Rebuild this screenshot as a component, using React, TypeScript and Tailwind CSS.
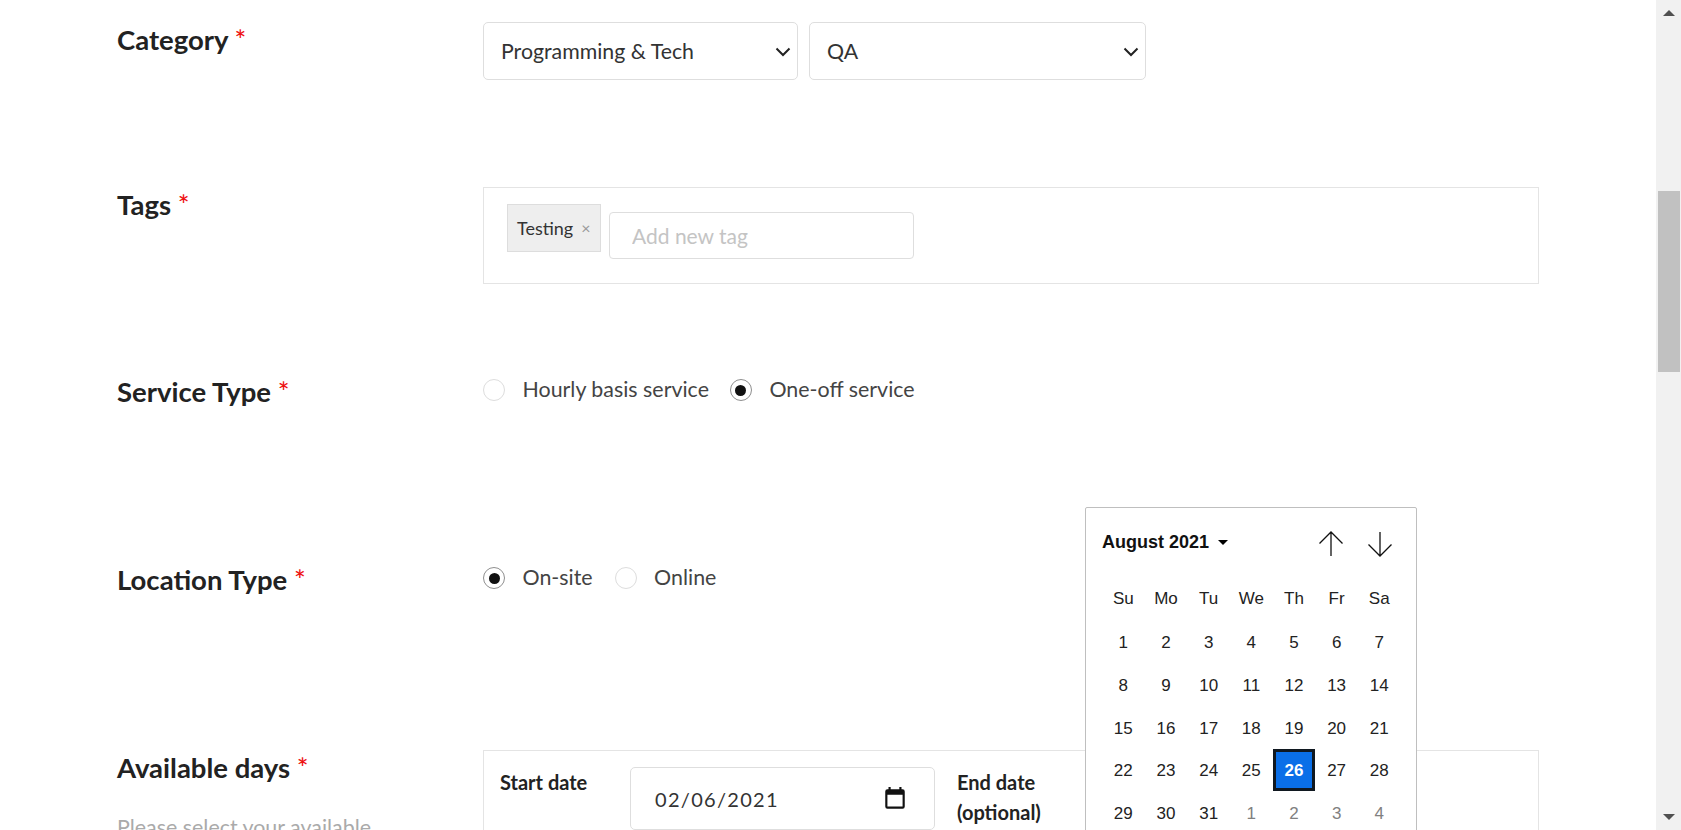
const lato = "font-['Lato','Noto_Sans',sans-serif]";

const weekDays = ["Su", "Mo", "Tu", "We", "Th", "Fr", "Sa"];
const days = [
  ...Array.from({ length: 31 }, (_, i) => ({ n: i + 1, muted: false })),
  ...[1, 2, 3, 4].map((n) => ({ n, muted: true })),
];

function Label({ text }: { text: string }) {
  return (
    <div className="text-[27.5px] leading-[36px] font-bold text-[#222]">
      {text} <span className="relative top-[0px] font-medium text-[#ee1111]">*</span>
    </div>
  );
}

function Radio({ checked, label, className }: { checked?: boolean; label: string; className?: string }) {
  return (
    <label className={`flex items-center ${className ?? ""}`}>
      <span
        className={
          checked
            ? "flex h-[22px] w-[22px] items-center justify-center rounded-full border border-[#8f8f8f] bg-white"
            : "h-[22px] w-[22px] rounded-full border border-[#dddddd] bg-white"
        }
      >
        {checked && <span className="h-[11px] w-[11px] rounded-full bg-[#111]" />}
      </span>
      <span className="relative top-[-1px] ml-[17.500px] text-[21.4px] leading-[26px] text-[#444]">{label}</span>
    </label>
  );
}

function SelectBox({ value, width }: { value: string; width: string }) {
  return (
    <div className={`relative h-[58px] ${width}`}>
      <select className="h-full w-full appearance-none rounded-[5px] border border-[#dedede] bg-white pl-[17px] pt-[2px] text-[21.3px] text-[#333]">
        <option>{value}</option>
      </select>
      <svg
        className="pointer-events-none absolute right-[7px] top-[25px]"
        width="16"
        height="10"
        viewBox="0 0 16 10"
        fill="none"
        stroke="#222"
        strokeWidth="2"
      >
        <path d="M1.500 1.500 8 8l6.500-6.500" />
      </svg>
    </div>
  );
}

function DatePopup() {
  return (
    <div className="absolute left-[1085px] top-[507px] z-10 h-[340px] w-[332px] rounded-[2px] border border-[#bfbfbf] bg-white pl-[16px] font-['Liberation_Sans',Arial,sans-serif] text-[17px] text-[#222]">
      <div className="flex h-[70px] items-center">
        <span className="mb-[2px] text-[18px] font-bold text-[#111]">August 2021</span>
        <span className="mb-[2px] ml-[9px] h-0 w-0 border-x-[5px] border-t-[5px] border-x-transparent border-t-black" />
        <svg className="ml-[90px] mt-[2px]" width="26" height="28" viewBox="0 0 26 28" fill="none" stroke="#111" strokeWidth="1.3">
          <path d="M13 2v24M1.500 13.500 13 2l11.500 11.500" />
        </svg>
        <svg className="ml-[23px] mt-[2px]" width="26" height="28" viewBox="0 0 26 28" fill="none" stroke="#111" strokeWidth="1.3">
          <path d="M13 2v24M1.500 14.500 13 26l11.500-11.500" />
        </svg>
      </div>
      <div className="grid grid-cols-[repeat(7,42.67px)] auto-rows-[42.67px]">
        {weekDays.map((d) => (
          <div key={d} className="mb-[1px] flex items-center justify-center">
            {d}
          </div>
        ))}
        {days.map((d, i) =>
          d.n === 26 && !d.muted ? (
            <div key={i} className="flex items-center justify-center border-[3px] border-[#101820] bg-[#0a6fe8] pt-[2px] font-bold text-white">
              {d.n}
            </div>
          ) : (
            <div key={i} className={`mt-[2px] flex items-center justify-center ${d.muted ? "text-[#808080]" : ""}`}>
              {d.n}
            </div>
          )
        )}
      </div>
    </div>
  );
}

export default function App() {
  return (
    <div className={`relative flex h-[830px] overflow-hidden bg-white ${lato}`}>
      <main className="min-w-0 flex-1 pl-[117px] pt-[22px]">
        <div className="mb-[107px] flex">
          <div className="w-[366px]">
            <Label text="Category" />
          </div>
          <div className="flex gap-[11px]">
            <SelectBox value="Programming & Tech" width="w-[315px]" />
            <SelectBox value="QA" width="w-[337px]" />
          </div>
        </div>

        <div className="mb-[90px] flex">
          <div className="w-[366px]">
            <Label text="Tags" />
          </div>
          <div className="flex h-[97px] w-[1056px] items-start border border-[#e4e4e4] pl-[23px] pt-[16px]">
            <div className="flex h-[48px] w-[94px] items-center border border-[#dddddd] bg-[#eeeeee] pl-[9px] text-[18px] text-[#333]">
              Testing
              <span className="ml-[8px] text-[16px] text-[#999]">×</span>
            </div>
            <input
              className="ml-[8px] mt-[8px] h-[47px] w-[305px] rounded-[4px] border border-[#dedede] pl-[22px] text-[21px] text-[#333] placeholder:text-[#c4c4c4]"
              placeholder="Add new tag"
            />
          </div>
        </div>

        <div className="mb-[152px] flex h-[36px]">
          <div className="w-[366px]">
            <Label text="Service Type" />
          </div>
          <div className="flex h-[32px] items-center">
            <Radio label="Hourly basis service" className="mr-[21px]" />
            <Radio checked label="One-off service" />
          </div>
        </div>

        <div className="mb-[152px] flex h-[36px]">
          <div className="w-[366px]">
            <Label text="Location Type" />
          </div>
          <div className="flex h-[32px] items-center">
            <Radio checked label="On-site" className="mr-[22px]" />
            <Radio label="Online" />
          </div>
        </div>

        <div className="flex">
          <div className="w-[366px]">
            <Label text="Available days" />
            <p className="mt-[27px] text-[21.4px] leading-[28px] text-[#aaaaaa]">Please select your available</p>
          </div>
          <div className="flex h-[120px] w-[1056px] items-start border border-[#e4e4e4] pl-[16px] pt-[16px]">
            <div className="w-[130px] text-[20px] leading-[30px] font-bold text-[#222]">Start date</div>
            <div className="flex h-[63px] w-[305px] items-center justify-between rounded-[5px] border border-[#dedede] pl-[24px] pr-[26px] text-[20px] tracking-[1.3px] text-[#333]">
              02/06/2021
              <svg width="26" height="26" viewBox="0 0 24 24" fill="#111">
                <path d="M19 3h-1V1h-2v2H8V1H6v2H5a2 2 0 0 0-2 2v14a2 2 0 0 0 2 2h14a2 2 0 0 0 2-2V5a2 2 0 0 0-2-2Zm0 16H5V8h14v11Z" />
              </svg>
            </div>
            <div className="ml-[22px] w-[110px] text-[20px] leading-[30px] font-bold text-[#222]">
              End date
              <br />
              (optional)
            </div>
          </div>
        </div>
      </main>

      <aside className="flex h-full w-[25px] shrink-0 flex-col items-center bg-[#f1f1f1]">
        <span className="mt-[10px] h-0 w-0 border-x-[6px] border-b-[6px] border-x-transparent border-b-[#505050]" />
        <div className="mt-[175px] h-[181px] w-[22px] bg-[#c1c1c1]" />
        <span className="mt-[442px] h-0 w-0 border-x-[6px] border-t-[6px] border-x-transparent border-t-[#505050]" />
      </aside>

      <DatePopup />
    </div>
  );
}
